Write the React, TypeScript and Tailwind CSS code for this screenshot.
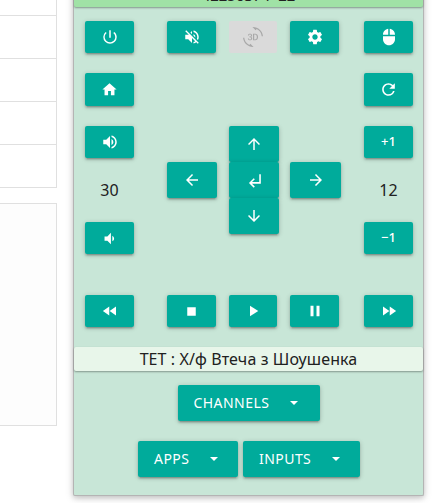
import { ReactNode } from 'react';
import {
  MdArrowBack,
  MdArrowDownward,
  MdArrowForward,
  MdArrowUpward,
  MdFastForward,
  MdFastRewind,
  MdHome,
  MdMouse,
  MdPause,
  MdPlayArrow,
  MdPowerSettingsNew,
  MdRefresh,
  MdSettings,
  MdStop,
  MdSubdirectoryArrowLeft,
  MdVolumeDown,
  MdVolumeOff,
  MdVolumeUp,
  Md3dRotation,
} from 'react-icons/md';

const btn = 'flex items-center justify-center rounded-[2px] bg-[#00ab9b] text-white shadow-[0_2px_2px_0_rgba(0,0,0,0.14),0_3px_1px_-2px_rgba(0,0,0,0.12),0_1px_5px_0_rgba(0,0,0,0.2)]';

const KeyBtn = ({ className, children }: { className: string; children: ReactNode }) => (
  <button type="button" className={`${btn} ${className}`}>
    {children}
  </button>
);

const MenuBtn = ({ label, className }: { label: string; className: string }) => (
  <button
    type="button"
    className={`flex items-center rounded-[2px] bg-[#00ab9b] text-white shadow-[0_2px_2px_0_rgba(0,0,0,0.14),0_3px_1px_-2px_rgba(0,0,0,0.12),0_1px_5px_0_rgba(0,0,0,0.2)] ${className} h-[36px] pb-[2px] pl-[16px] text-[14px] tracking-[0.45px] uppercase`}
  >
    {label}
    <span className="mt-[2px] ml-[21px] h-0 w-0 border-x-[4px] border-t-[4px] border-x-transparent border-t-white" />
  </button>
);

export default function App() {
  return (
    <div className="flex h-[503px] w-[441px] overflow-hidden bg-white font-['Noto_Sans','Open_Sans',sans-serif] text-[#212121]">
      <div className="w-[57px] shrink-0">
        <div className="h-[16px] border-r border-b border-[#e0e0e0]" />
        <div className="h-[43px] border-r border-b border-[#e0e0e0]" />
        <div className="h-[43px] border-r border-b border-[#e0e0e0]" />
        <div className="h-[43px] border-r border-b border-[#e0e0e0]" />
        <div className="h-[43px] border-r border-b border-[#e0e0e0]" />
        <div className="mt-[15px] h-[223px] border-y border-r border-[#e0e0e0] bg-[#fdfdfd]" />
      </div>

      <div className="mt-[-14px] ml-[16px] flex h-[510px] w-[351px] shrink-0 flex-col rounded-[2px] border-x border-b border-[#b4b4b4] bg-[#c8e6d7] shadow-[0_2px_5px_0_rgba(0,0,0,0.16),0_2px_10px_0_rgba(0,0,0,0.12)]">
        <div className="flex h-[21px] items-end justify-center overflow-hidden rounded-[2px] bg-[#a0e2a6] text-[15px] leading-[22px] shadow-[0_1px_2px_rgba(0,0,0,0.35)]">
          <span className="mb-[1px] h-[22px] text-[#212121]">4225037 F-22</span>
        </div>

        <div className="mt-[14px] flex pl-[11px]">
          <KeyBtn className="h-[32px] w-[49px]"><MdPowerSettingsNew size={18} /></KeyBtn>
          <KeyBtn className="ml-[33px] h-[32px] w-[49px]"><MdVolumeOff size={18} /></KeyBtn>
          <div className="ml-[13px] flex h-[32px] w-[48px] items-center justify-center rounded-[2px] bg-[#dadada] text-[#a8a8a8]"><Md3dRotation size={20} /></div>
          <KeyBtn className="ml-[13px] h-[32px] w-[49px]"><MdSettings size={18} /></KeyBtn>
          <KeyBtn className="ml-[25px] h-[32px] w-[49px]"><MdMouse size={18} /></KeyBtn>
        </div>

        <div className="mt-[20px] flex justify-between pr-[10px] pl-[11px]">
          <KeyBtn className="h-[33px] w-[49px]"><MdHome size={17} /></KeyBtn>
          <KeyBtn className="h-[33px] w-[49px]"><MdRefresh size={19} /></KeyBtn>
        </div>

        <div className="mt-[20px] flex h-[128px] pl-[11px]">
          <div className="flex w-[49px] flex-col justify-between">
            <KeyBtn className="h-[32px] w-[49px]"><MdVolumeUp size={18} /></KeyBtn>
            <p className="text-center text-[16px] leading-[24px]">30</p>
            <KeyBtn className="h-[32px] w-[49px]"><MdVolumeDown size={17} /></KeyBtn>
          </div>
          <KeyBtn className="mt-[36px] ml-[33px] h-[36px] w-[50px]"><MdArrowBack size={18} /></KeyBtn>
          <div className="ml-[12px] w-[50px]">
            <KeyBtn className="h-[36px] w-[50px]"><MdArrowUpward size={18} /></KeyBtn>
            <KeyBtn className="h-[36px] w-[50px]"><MdSubdirectoryArrowLeft size={19} /></KeyBtn>
            <KeyBtn className="h-[36px] w-[50px]"><MdArrowDownward size={18} /></KeyBtn>
          </div>
          <KeyBtn className="mt-[36px] ml-[11px] h-[36px] w-[51px]"><MdArrowForward size={18} /></KeyBtn>
          <div className="ml-[23px] flex w-[49px] flex-col justify-between">
            <KeyBtn className="h-[32px] w-[49px] text-[13px] font-medium">+1</KeyBtn>
            <p className="text-center text-[16px] leading-[24px]">12</p>
            <KeyBtn className="h-[32px] w-[49px] text-[13px] font-medium">−1</KeyBtn>
          </div>
        </div>

        <div className="mt-[41px] flex pl-[11px]">
          <KeyBtn className="h-[32px] w-[49px]"><MdFastRewind size={18} /></KeyBtn>
          <KeyBtn className="ml-[33px] h-[32px] w-[49px]"><MdStop size={17} /></KeyBtn>
          <KeyBtn className="ml-[13px] h-[32px] w-[48px]"><MdPlayArrow size={18} /></KeyBtn>
          <KeyBtn className="ml-[13px] h-[32px] w-[49px]"><MdPause size={18} /></KeyBtn>
          <KeyBtn className="ml-[25px] h-[32px] w-[49px]"><MdFastForward size={18} /></KeyBtn>
        </div>

        <div className="mt-[20px] h-[24px] rounded-[2px] bg-[#e8f6ea] text-center text-[16px] leading-[24px] tracking-[0.1px] shadow-[0_1px_2px_rgba(0,0,0,0.35)]">
          ТЕТ : Х/ф Втеча з Шоушенка
        </div>

        <div className="mt-[14px] flex justify-center">
          <MenuBtn label="Channels" className="w-[142px]" />
        </div>
        <div className="mt-[20px] ml-[64px] flex gap-[5px]">
          <MenuBtn label="Apps" className="w-[100px]" />
          <MenuBtn label="Inputs" className="w-[117px]" />
        </div>
      </div>
    </div>
  );
}
